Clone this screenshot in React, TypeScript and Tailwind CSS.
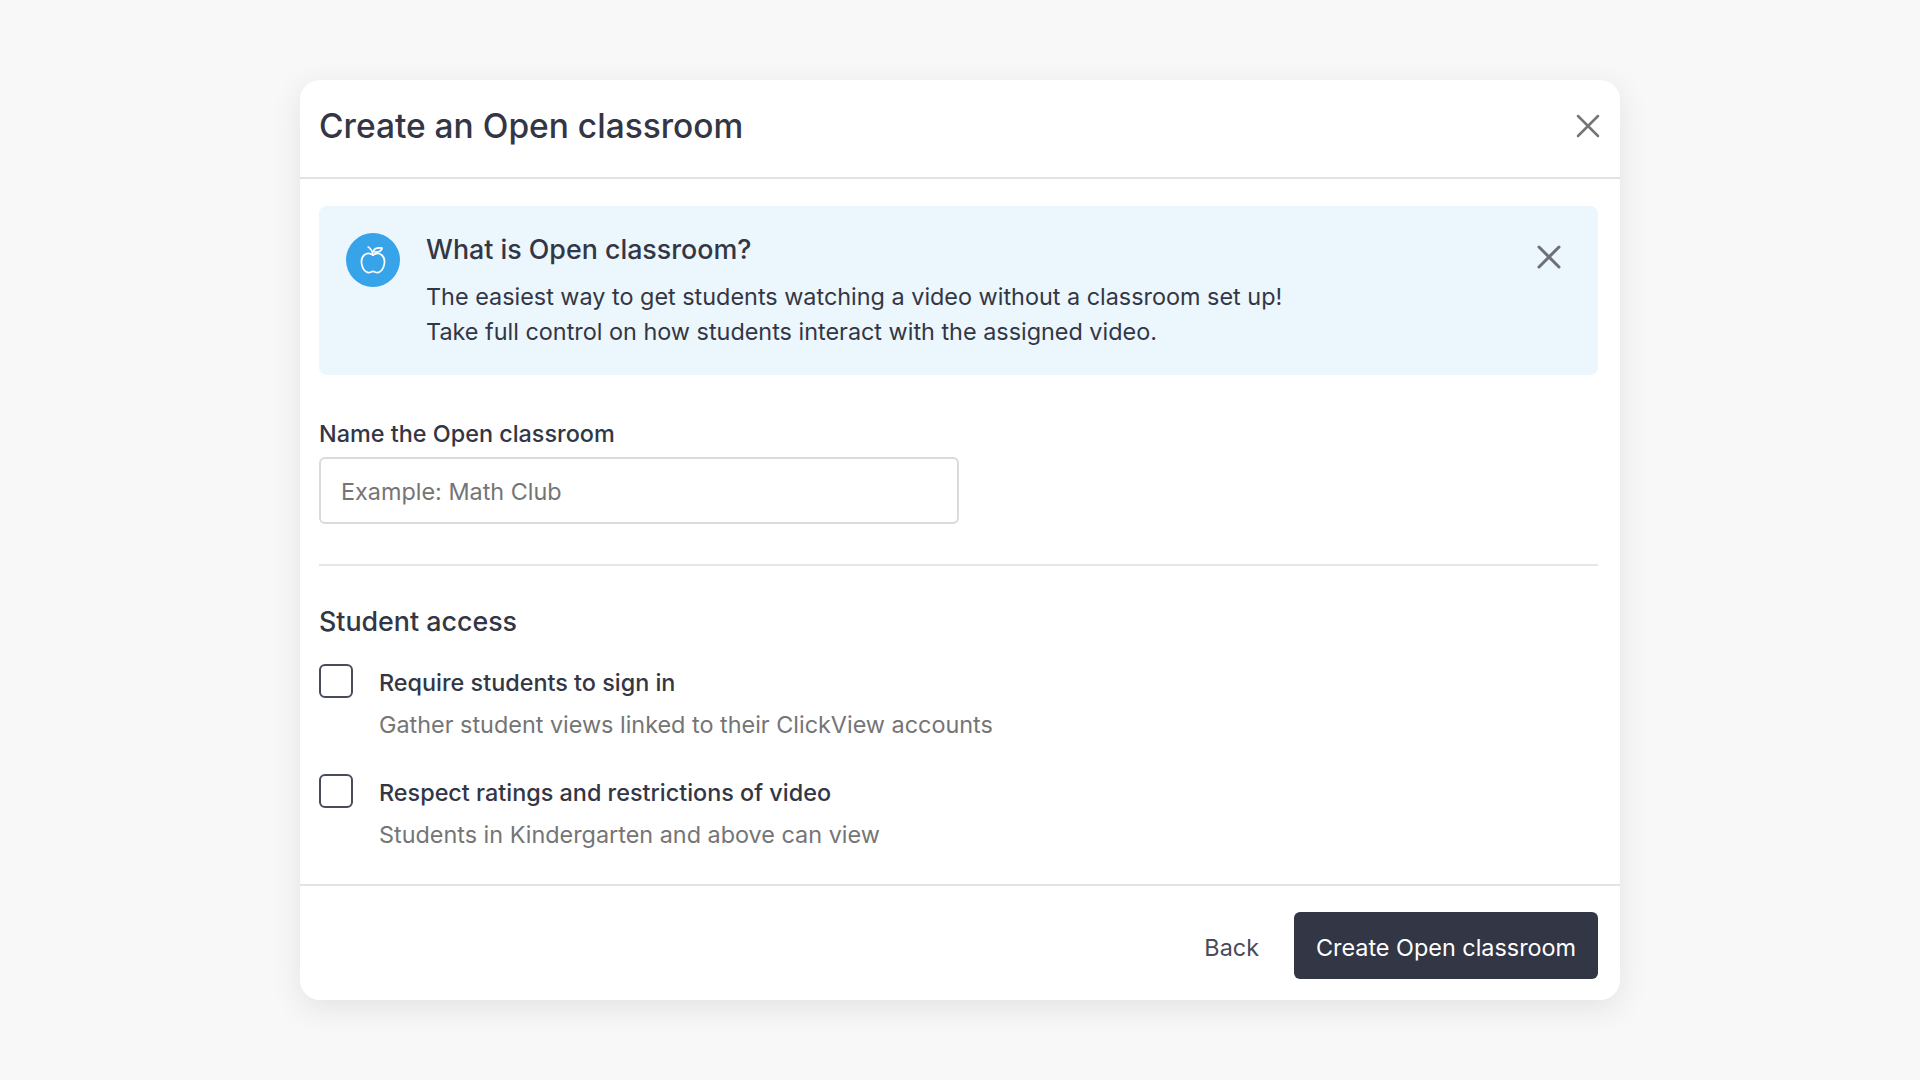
import React from 'react';
import { X } from 'lucide-react';

const accessOptions = [
  {
    label: 'Require students to sign in',
    hint: 'Gather student views linked to their ClickView accounts',
  },
  {
    label: 'Respect ratings and restrictions of video',
    hint: 'Students in Kindergarten and above can view',
  },
];

function AppleIcon() {
  return (
    <svg viewBox="0 0 24 28" className="h-[30px] w-[26px]" fill="none" stroke="white" strokeWidth="1.6" strokeLinecap="round" strokeLinejoin="round">
      <path d="M12 9.5C9.5 7.6 6.2 7.5 3.9 9.3 1.6 11.2.9 14.2 1.4 17.3c.5 3.2 2.2 6.6 4.6 8 1.8 1 3.2.3 4.2-.2.9-.5 2.7-.5 3.6 0 1 .5 2.4 1.2 4.2.2 2.4-1.4 4.1-4.8 4.6-8 .5-3.100-.2-6.100-2.500-8C17.800 7.500 14.500 7.600 12 9.500Z" />
      <path d="M12 9.500C11.700 6.500 10 3.600 7.500 1.800" />
      <path d="M12 6.300C13 3.500 16 2.200 20.500 2.800 19.800 5.800 16.500 7.200 12 6.300Z" />
    </svg>
  );
}

export default function App() {
  return (
    <div className="flex h-[1080px] items-center justify-center bg-[#f8f8f8] font-['Inter',sans-serif] text-[#333645]">
      <div className="flex h-[920px] w-[1320px] flex-col rounded-[20px] bg-white shadow-[0_8px_32px_rgba(0,0,0,0.09)]">
        <div className="flex h-[99px] shrink-0 items-start justify-between border-b-2 border-[#e3e3e3] pl-[19px] pr-[12px]">
          <h1 className="mt-[23px] text-[33.5px] leading-[46px] font-medium">Create an Open classroom</h1>
          <button className="mt-[26px] text-[#757575]">
            <X className="h-[40px] w-[40px]" strokeWidth={1.5} />
          </button>
        </div>

        <div className="flex flex-1 flex-col pl-[19px] pt-[27px] pr-[22px]">
          <div className="flex h-[169px] rounded-[8px] bg-[#ebf6fd] pl-[27px] pr-[29px]">
            <div className="mt-[27px] flex h-[54px] w-[54px] shrink-0 items-center justify-center rounded-full bg-[#37a3e9]">
              <AppleIcon />
            </div>
            <div className="ml-[26px] flex-1 pt-[24px]">
              <h2 className="text-[26.8px] leading-[38px] font-medium">What is Open classroom?</h2>
              <p className="mt-[11px] text-[23.4px] leading-[35px]">
                The easiest way to get students watching a video without a classroom set up!
                <br />
                Take full control on how students interact with the assigned video.
              </p>
            </div>
            <button className="mt-[31px] self-start text-[#6f7076]">
              <X className="h-[40px] w-[40px]" strokeWidth={1.8} />
            </button>
          </div>

          <label className="mt-[42px] block text-[23.4px] leading-[34px] font-medium">Name the Open classroom</label>
          <div className="mt-[6px] flex h-[67px] w-[640px] items-center rounded-[6px] border-2 border-[#dadada] pl-[20px] pt-[2px] text-[23.4px] text-[#757575]">
            Example: Math Club
          </div>

          <div className="mt-[40px] h-[2px] bg-[#e6e6e6]" />

          <h3 className="mt-[36px] text-[26.8px] leading-[38px] font-medium">Student access</h3>

          <div className="mt-[22px] flex flex-col gap-[26px]">
            {accessOptions.map((opt) => (
              <div key={opt.label} className="flex">
                <div className="mt-[2px] h-[34px] w-[34px] shrink-0 rounded-[6px] border-2 border-[#474b5c]" />
                <div className="ml-[26px]">
                  <div className="text-[23.4px] leading-[42px] font-medium">{opt.label}</div>
                  <div className="text-[23.4px] leading-[42px] text-[#757575]">{opt.hint}</div>
                </div>
              </div>
            ))}
          </div>
        </div>

        <div className="flex h-[116px] shrink-0 items-start justify-end border-t-2 border-[#e3e3e3] pr-[22px] pt-[26px]">
          <button className="mr-[35px] h-[67px] pt-[5px] text-[23.4px] text-[#474b5c]">Back</button>
          <button className="h-[67px] w-[304px] rounded-[6px] bg-[#333645] pt-[5px] text-[23.4px] text-white">Create Open classroom</button>
        </div>
      </div>
    </div>
  );
}
